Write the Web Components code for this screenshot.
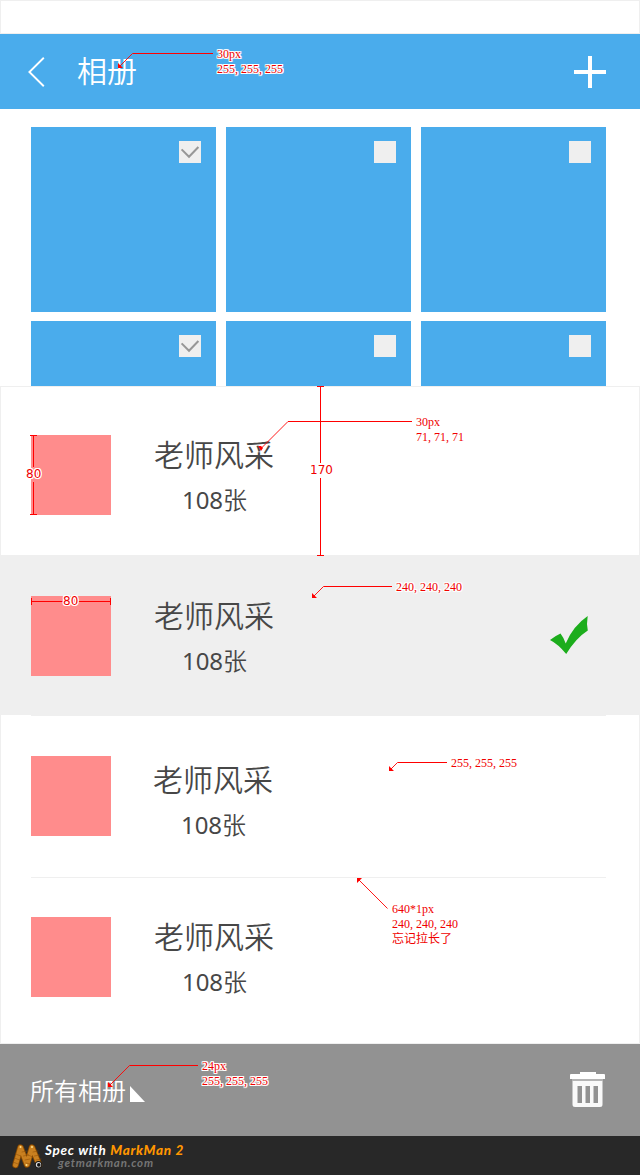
<!DOCTYPE html>
<html lang="zh-CN">
<head>
<meta charset="utf-8">
<title>相册</title>
<style>
body{margin:0;background:#fff;font-family:"Noto Sans","Noto Sans CJK SC",sans-serif;color:#474747}
</style>
</head>
<body>
<album-page></album-page>
<script>
const define = (name, html, init) => customElements.define(name, class extends HTMLElement {
  constructor() {
    super();
    const t = document.createElement('template');
    t.innerHTML = html;
    this.attachShadow({ mode: 'open' }).appendChild(t.content.cloneNode(true));
    if (init) init(this, this.shadowRoot);
  }
});

define('nav-bar', `
<style>
:host{display:flex;align-items:center;height:75px;box-sizing:border-box;background:#4aacec;color:#fff;padding:0 34px 0 28px;font:350 30px/44px "Noto Sans CJK SC",sans-serif}
.title{flex:1;margin:-5px 0 0 32px}
svg{display:block}
</style>
<svg width="17" height="32" viewBox="0 0 17 32"><path d="M15.8 1.8L1.4 16l14.400 14.200" fill="none" stroke="#fff" stroke-width="1.9"/></svg>
<div class="title"><slot></slot></div>
<svg width="32" height="32" viewBox="0 0 32 32"><path d="M14 0h4v14h14v4H18v14h-4V18H0v-4h14z" fill="#fff"/></svg>
`);

define('photo-tile', `
<style>
:host{display:flex;justify-content:flex-end;height:185px;box-sizing:border-box;padding:14px 15px;background:#4aacec}
.box{width:22px;height:22px;background:#efefef}
svg{display:none}
:host([checked]) svg{display:block}
</style>
<div class="box"><svg width="22" height="22" viewBox="0 0 22 22"><path d="M2.6 8.4L10 15.8L19.4 6" fill="none" stroke="#979797" stroke-width="2"/></svg></div>
`);

define('photo-grid', `
<style>
:host{display:grid;grid-template-columns:repeat(3,185px);gap:9px 10px;height:277px;box-sizing:border-box;padding:18px 31px 0;overflow:hidden;align-content:start}
</style>
<slot></slot>
`);

define('album-row', `
<style>
:host{display:flex;align-items:flex-start;box-sizing:border-box;height:var(--h);padding:var(--top) 51px 0 30px}
:host([selected]){background:#efefef;margin:0 -1px;padding-left:31px;padding-right:52px}
.thumb{width:80px;height:80px;background:#ff8c8c;flex:none}
.text{width:120px;margin:var(--drop,0px) 0 0 var(--gap,43px);text-align:center}
.name{font:350 30px/44px "Noto Sans CJK SC",sans-serif;margin-top:-4px;white-space:nowrap}
.count{font:400 24px/44px "Noto Sans","Noto Sans CJK SC",sans-serif;margin:2px 0 0 1px}
.count span{font-family:"Noto Sans CJK SC",sans-serif;font-weight:350}
svg{display:none;margin:20px 0 0 auto}
:host([selected]) svg{display:block}
</style>
<div class="thumb"></div>
<div class="text"><div class="name"><slot></slot></div><div class="count">108<span>张</span></div></div>
<svg width="38" height="38" viewBox="0 0 38 38"><path d="M0 24Q5 20 10.5 17.5Q14 22 15.7 27.5Q23 10 37.7 0Q36.3 8 37.8 14.5Q26 22 16.2 38Q8 28 0 24z" fill="#1cad1c"/></svg>
`);

define('album-list', `
<style>
:host{display:block;height:658px;box-sizing:border-box;border:1px solid #efefef;background:#fff}
</style>
<slot></slot>
`);

define('row-rule', `<style>:host{display:block;height:1px;margin:0 33px 0 30px;background:#efefef}</style>`);

define('tool-bar', `
<style>
:host{display:flex;align-items:center;height:92px;background:#929292;color:#fff;padding:0 34px 0 30px;font:350 24px/36px "Noto Sans CJK SC",sans-serif}
.tri{margin:8px auto 0 4px}
.bin{margin-bottom:1px}
svg{display:block}
</style>
<slot></slot>
<svg class="tri" width="15" height="16" viewBox="0 0 15 16"><path d="M0 0L15 16H0z" fill="#fff"/></svg>
<svg class="bin" width="36" height="36" viewBox="0 0 36 36"><path d="M10 0h16v2h8q1 0 1 1v4H0V3q0-1 1-1h9z" fill="#fff"/><path d="M2 7h31v2H2z" fill="#b4b4b4"/><path fill-rule="evenodd" d="M2.500 9h30v23.500q0 2.500-2.500 2.500H5q-2.500 0-2.500-2.500zM7.500 14v17h4.500v-17zM15.500 14v17h4.500v-17zM23.500 14v17h4.500v-17z" fill="#f9f9f9"/></svg>
`);

define('brand-bar', `
<style>
:host{display:flex;height:39px;box-sizing:border-box;background:#282828;padding:7px 0 0 11px;color:#fff}
svg{flex:none;display:block}
.t{margin-left:1px;white-space:nowrap;font:italic 700 13.5px/14px Lato,sans-serif}
.a{letter-spacing:.7px}
b{color:#ff9600}
.b{color:#757575;font-size:11.5px;line-height:12px;margin-left:13px;letter-spacing:.8px}
</style>
<svg width="33" height="27" viewBox="0 0 33 27">
<g fill="none" stroke-linecap="round" stroke-linejoin="round">
<path d="M4.500 22L9.500 4.500L16 21.500L21 4.500L28 21.500" stroke="#864800" stroke-width="6.500"/>
<path d="M4.500 22L9.500 4.500L16 21.500L21 4.500L28 21.500" stroke="#c98020" stroke-width="4.800"/>
<path d="M2 19l5 2M3.500 15l5 2M4.700 11l5 2M11 9l5-1M12.500 13l5-1M14 17l5-1M22 9l5-1M23.500 13l5-1M25 17l5-1M15 20l4 1M17 12l5 2" stroke="#8b4a05" stroke-width=".5"/>
</g>
<circle cx="9.500" cy="4" r="1" fill="#ffe08a"/><circle cx="21" cy="4" r="1" fill="#ffe08a"/><circle cx="15.500" cy="22" r="1" fill="#ffe08a"/>
<circle cx="27.500" cy="21.500" r="3.600" fill="#111"/><circle cx="27.500" cy="21.700" r="2.700" fill="#ddd"/><circle cx="27.800" cy="21.900" r="1.800" fill="#111"/>
</svg>
<div class="t"><div class="a">Spec with <b>MarkMan 2</b></div><div class="b">getmarkman.com</div></div>
`);

/* Annotation label; x and y give its place on the sheet. */
define('spec-note', `
<style>
:host{position:absolute;color:#f00000;font:12px/15px "Liberation Serif","Noto Sans CJK SC",serif;
text-shadow:1px 0 #fff,-1px 0 #fff,0 1px #fff,0 -1px #fff,1px 1px #fff,-1px -1px #fff,1px -1px #fff,-1px 1px #fff}
:host([size]){font:12px/15px "DejaVu Sans",sans-serif}
slot{display:block;white-space:pre}
</style><slot></slot>
`, el => {
  el.style.left = el.getAttribute('x') + 'px';
  el.style.top = el.getAttribute('y') + 'px';
});

define('spec-lines', `
<style>:host{position:absolute;inset:0}svg{display:block}</style>
<svg width="640" height="1175" viewBox="0 0 640 1175">
<g fill="none" stroke="#f00">
<path d="M213 53.500H132.500M412 421.500H288M392 586.500H323.500M447 762.500H397.500M198 1065.500H129.500"/>
<path d="M132.500 53.500L119 67M288 421.500L260 449.500M323.500 586.500L313 597M397.500 762.500L390 770M387.500 908.500L358 879M129.500 1065.500L109 1086" stroke-width=".9"/>
<path shape-rendering="crispEdges" d="M317 386.500h7M317 555.500h7M320.500 386v77M320.500 478v78M30 435.500h7M30 514.500h7M33.500 435v32M33.500 482v33M31.500 598v7M110.500 598v7M31 601.500h32M78 601.500h32"/>
</g>
<path fill="#f00" d="M118 63v5h5zM258 446h3l2 2-2 3zM312 593v5h5zM389 766v5h5zM357 878h5l-5 5zM108 1082v5h5z"/>
</svg>
`);

define('album-page', `
<style>
:host{display:block;position:relative;width:640px;height:1175px;overflow:hidden}
.status{height:34px;box-sizing:border-box;border:1px solid #efefef}
</style>
<div class="status"></div>
<nav-bar>相册</nav-bar>
<photo-grid>
<photo-tile checked></photo-tile><photo-tile></photo-tile><photo-tile></photo-tile>
<photo-tile checked></photo-tile><photo-tile></photo-tile><photo-tile></photo-tile>
</photo-grid>
<album-list>
<album-row style="--h:168px;--top:48px">老师风采</album-row>
<album-row selected style="--h:160px;--top:41px">老师风采</album-row>
<row-rule></row-rule>
<album-row style="--h:161px;--top:40px;--drop:4px;--gap:42px">老师风采</album-row>
<row-rule></row-rule>
<album-row style="--h:165px;--top:39px">老师风采</album-row>
</album-list>
<tool-bar>所有相册</tool-bar>
<brand-bar></brand-bar>
<spec-lines></spec-lines>
<spec-note x="217" y="47">30px
255, 255, 255</spec-note>
<spec-note x="416" y="415">30px
71, 71, 71</spec-note>
<spec-note x="396" y="580">240, 240, 240</spec-note>
<spec-note x="451" y="756">255, 255, 255</spec-note>
<spec-note x="392" y="902">640*1px
240, 240, 240
忘记拉长了</spec-note>
<spec-note x="202" y="1059">24px
255, 255, 255</spec-note>
<spec-note size x="310" y="463">170</spec-note>
<spec-note size x="26" y="467">80</spec-note>
<spec-note size x="63" y="594">80</spec-note>
`);
</script>
</body>
</html>
